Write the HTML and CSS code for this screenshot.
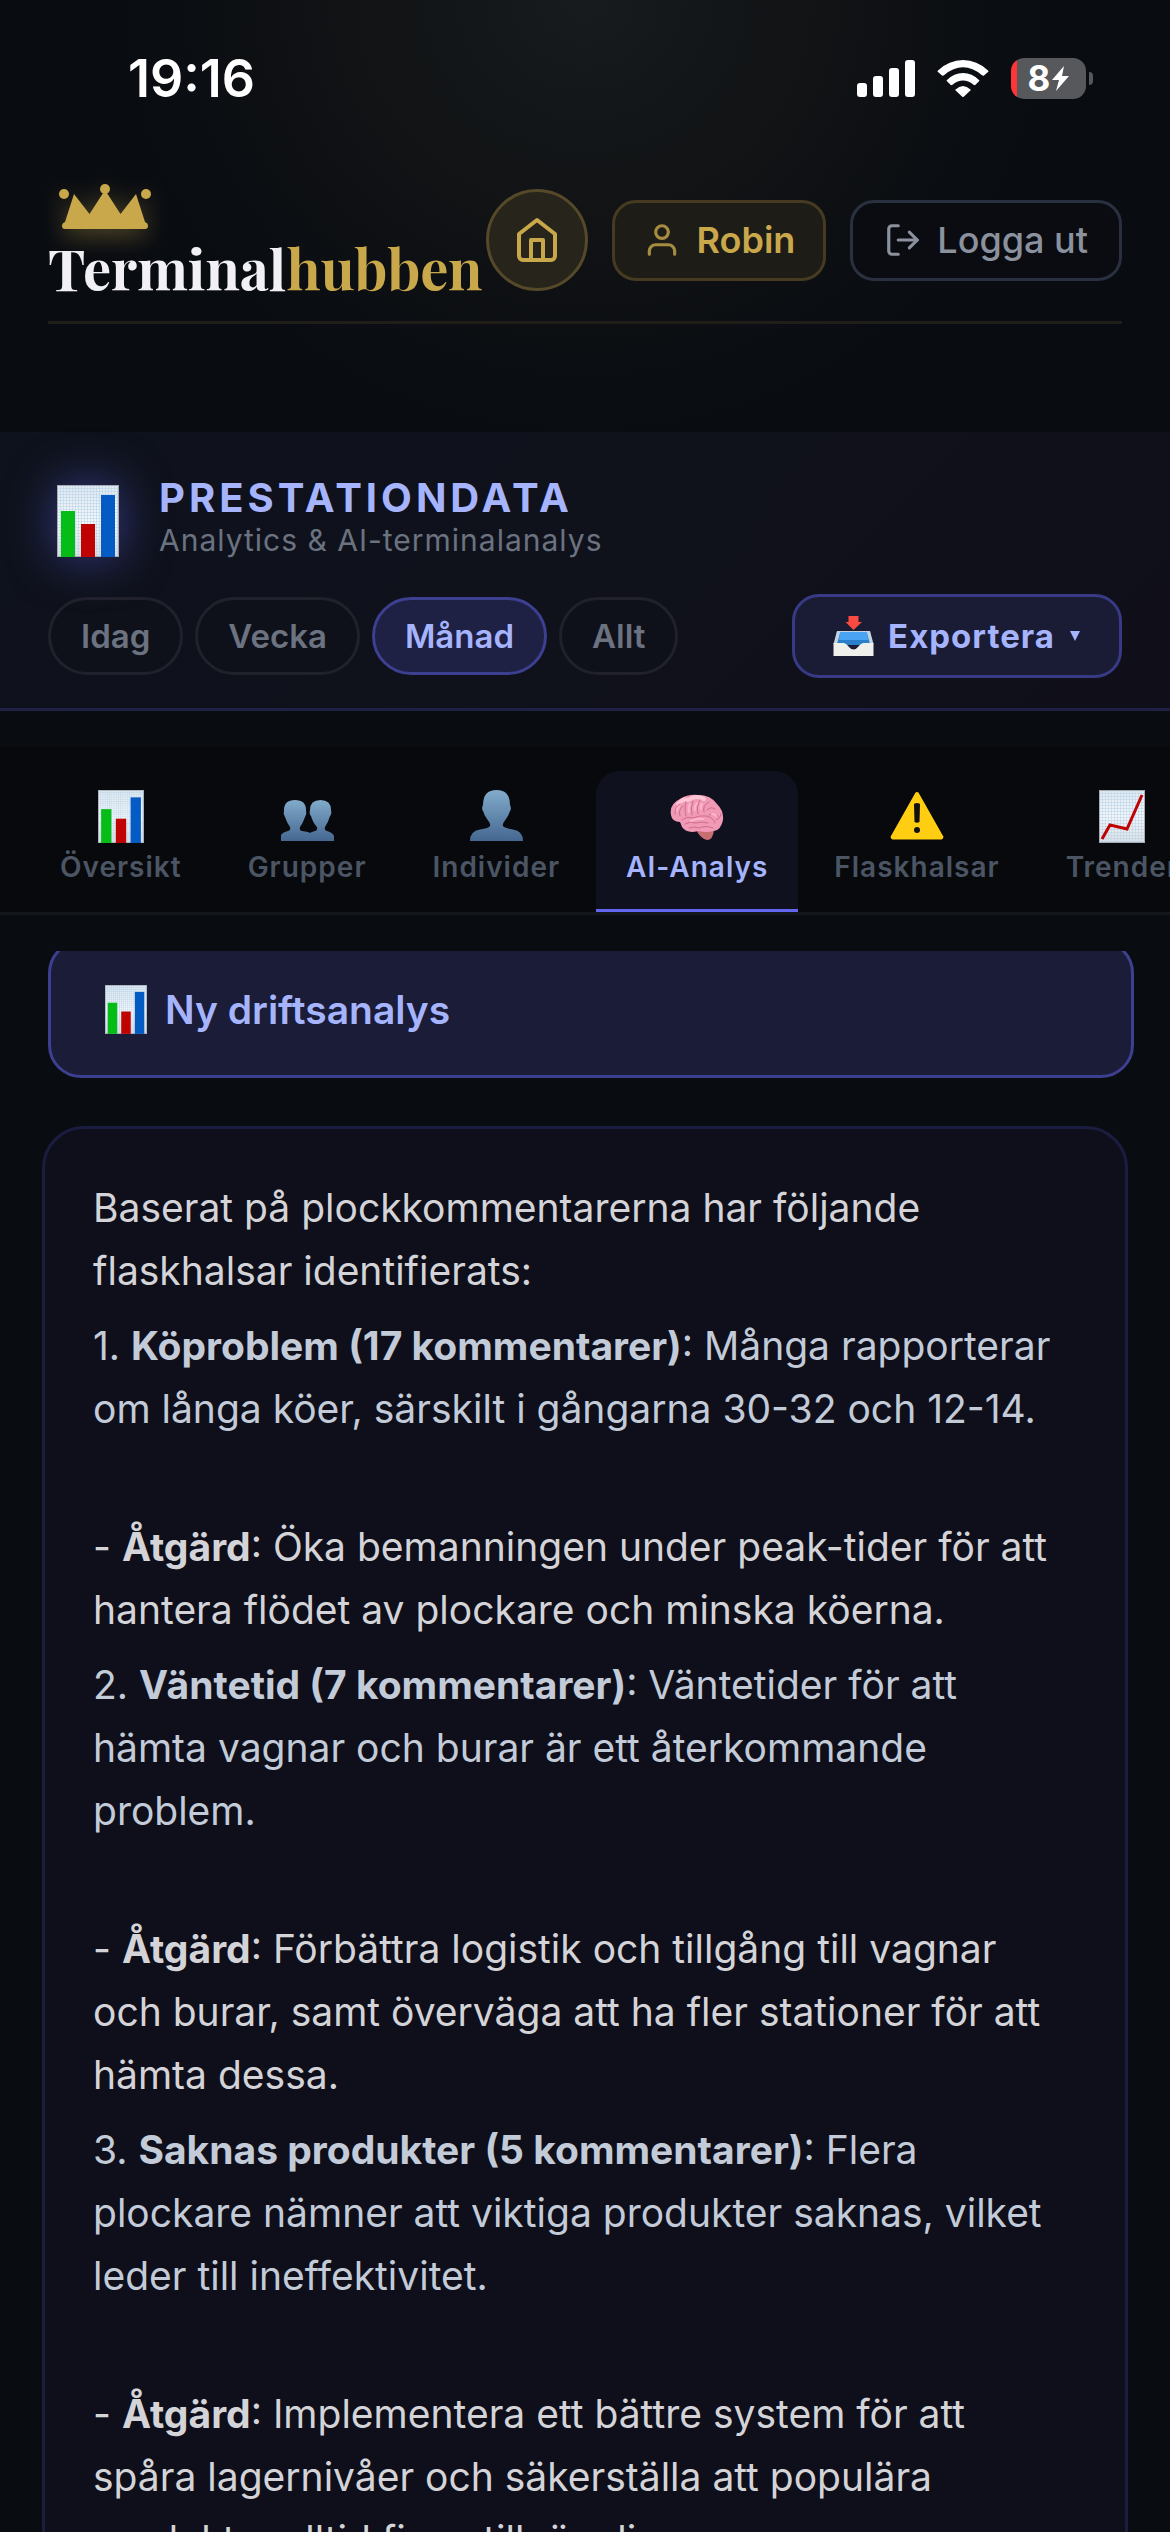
FILE: index.html
```html
<!DOCTYPE html>
<html lang="sv">
<head>
    <meta charset="UTF-8">
    <meta name="viewport" content="width=device-width, initial-scale=1.0">
    <title>Terminalhubben</title>
    <link rel="stylesheet" href="styles.css">
</head>
<body>
    <!-- Delade ikoner -->
    <svg class="sprite" aria-hidden="true">
        <defs>
            <linearGradient id="paper" x1="0" y1="0" x2="0" y2="1">
                <stop offset="0" stop-color="#dfe9f1"/>
                <stop offset="0.5" stop-color="#f3f7fa"/>
                <stop offset="1" stop-color="#dcdfe2"/>
            </linearGradient>
            <pattern id="grid" width="3" height="3" patternUnits="userSpaceOnUse">
                <path d="M0 0H3M0 0V3" stroke="#b4d0e6" stroke-width="1"/>
            </pattern>
            <linearGradient id="person" x1="0" y1="0" x2="0" y2="1">
                <stop offset="0" stop-color="#82abcb"/>
                <stop offset="1" stop-color="#456790"/>
            </linearGradient>
        </defs>
        <symbol id="icon-bars" viewBox="0 0 62 72">
            <rect width="62" height="72" fill="url(#paper)"/>
            <rect width="62" height="72" fill="url(#grid)"/>
            <rect x="0.5" y="0.5" width="61" height="71" fill="none" stroke="#a4abb2"/>
            <rect x="4" y="26" width="14" height="46" fill="#06bd18"/>
            <rect x="24" y="39" width="14" height="33" fill="#bf0202"/>
            <rect x="44" y="10" width="14" height="62" fill="#045bc4"/>
        </symbol>
    </svg>

    <div class="app">
        <div class="status-bar">
            <span class="time">19:16</span>
            <div class="status-icons">
                <svg width="58" height="37" viewBox="0 0 58 37" fill="#fff">
                    <rect y="23" width="10" height="14" rx="3"/>
                    <rect x="16" y="16" width="10" height="21" rx="3"/>
                    <rect x="32" y="8" width="10" height="29" rx="3"/>
                    <rect x="48" width="10" height="37" rx="3"/>
                </svg>
                <svg width="52" height="37" viewBox="0 0 52 37" fill="#fff">
                    <path d="M1 10.500Q0 11.500 1 12L5 15.500Q6 16 7 15.200Q26 -0.500 45 15.200Q46 16 47 15.500L51 12Q52 11.500 51 10.500Q40 0 26 0Q12 0 1 10.500Z"/>
                    <path d="M10 20Q9 20.500 10 21.300L13.500 24.800Q14.500 25.500 15.500 24.700Q26 16.500 36.500 24.700Q37.500 25.500 38.500 24.800L42 21.300Q43 20.500 42 20Q35 13 26 13Q17 13 10 20Z"/>
                    <path d="M18.500 29.500Q18 30 18.600 30.500L25.300 36.700Q26 37.300 26.700 36.700L33.400 30.500Q34 30 33.500 29.500Q26 22.500 18.500 29.500Z"/>
                </svg>
                <div class="battery">
                    <span>8</span>
                    <svg width="17" height="25" viewBox="0 0 17 25" fill="#fff"><path d="M12 0L0 14H7L4 25L17 10H10Z"/></svg>
                </div>
            </div>
        </div>

        <header class="header">
            <div class="logo">
                <svg class="crown" width="92" height="46" viewBox="0 0 92 46" fill="#c9a84c">
                    <path d="M15 10L30.500 30L46 6L61.500 30L77 10L86 38Q89 39 89 42Q89 45 86 45H6Q3 45 3 42Q3 39 6 38Z"/>
                    <circle cx="5" cy="10" r="5"/>
                    <circle cx="46" cy="5" r="5"/>
                    <circle cx="87" cy="10" r="5"/>
                </svg>
                <h1>Terminal<span>hubben</span></h1>
            </div>
            <nav class="actions">
                <a href="#" class="home-btn" aria-label="Hem">
                    <svg width="48" height="48" viewBox="0 0 24 24"><path d="M3 9l9-7 9 7v11a2 2 0 0 1-2 2H5a2 2 0 0 1-2-2z"/><path d="M9 22V12h6v10"/></svg>
                </a>
                <button type="button" class="btn btn-user">
                    <svg width="38" height="38" viewBox="0 0 24 24"><path d="M20 21v-2a4 4 0 0 0-4-4H8a4 4 0 0 0-4 4v2"/><circle cx="12" cy="7" r="4"/></svg>
                    Robin
                </button>
                <button type="button" class="btn btn-logout">
                    <svg width="38" height="38" viewBox="0 0 24 24"><path d="M9 21H5a2 2 0 0 1-2-2V5a2 2 0 0 1 2-2h4"/><path d="M16 17l5-5-5-5"/><path d="M21 12H9"/></svg>
                    Logga ut
                </button>
            </nav>
        </header>

        <section class="panel">
            <div class="panel-title">
                <svg class="panel-icon" width="62" height="72"><use href="#icon-bars"/></svg>
                <div>
                    <h2>PRESTATIONDATA</h2>
                    <p>Analytics &amp; AI-terminalanalys</p>
                </div>
            </div>
            <div class="panel-controls">
                <div class="periods">
                    <button type="button" class="pill">Idag</button>
                    <button type="button" class="pill">Vecka</button>
                    <button type="button" class="pill active">Månad</button>
                    <button type="button" class="pill">Allt</button>
                </div>
                <button type="button" class="btn-export">
                    <svg width="41" height="41" viewBox="0 0 41 41">
                        <path d="M4 15H37L40 29H1Z" fill="#2a7fcb"/>
                        <path d="M4 15H37L40.500 28H37L34 17H7L4 28H0.500Z" fill="#c5d3db"/>
                        <path d="M7 16H34L35 24H6Z" fill="#4aa3f3"/>
                        <path d="M0.500 27H11Q14 28 16 31Q20.500 36 25 31Q27 28 30 27H40.500V40H0.500Z" fill="#efefec"/>
                        <path d="M15.500 0H25.500V6H29L20.500 14L12.500 6H15.500Z" fill="#fb4a41"/>
                    </svg>
                    Exportera
                    <svg width="12" height="12" viewBox="0 0 12 12"><path d="M1 1H11L6 11Z" fill="#a5b4fc"/></svg>
                </button>
            </div>
        </section>

        <nav class="tabs">
            <a href="#" class="tab">
                <svg width="46" height="53"><use href="#icon-bars"/></svg>
                Översikt
            </a>
            <a href="#" class="tab">
                <svg width="53" height="53" viewBox="0 0 53 53" fill="url(#person)">
                    <path d="M27 51V45Q29 42 34 41Q37 40 36 37Q32 33 30 26Q28 24 29 20Q29 10 39.500 10Q50 10 50 20Q51 24 49 26Q47 33 44 37Q43 40 46 41Q52 43 53 46V51Z"/>
                    <path d="M0 51V45Q2 42 7 41Q10 40 9 37Q6 33 4 27Q2 24 3 20Q3 10 14 10Q25 10 25 20Q26 24 24 27Q22 33 19 37Q18 40 21 41Q34 42 35 51Z"/>
                </svg>
                Grupper
            </a>
            <a href="#" class="tab">
                <svg width="53" height="53" viewBox="0 0 53 53" fill="url(#person)">
                    <path d="M0 51Q0 41 10 39.500Q19 38 20 36Q21 34 17 29Q14 25 13.500 22Q11 19 13 15Q13 0 26.500 0Q40 0 40 15Q42 19 39.500 22Q39 25 36 29Q32 34 33 36Q34 38 43 39.500Q53 41 53 51Z"/>
                </svg>
                Individer
            </a>
            <a href="#" class="tab active">
                <svg width="54" height="53" viewBox="0 0 54 53" fill="none" stroke-linecap="round">
                    <path d="M26 40Q36 35 44 40Q43 50 37 50Q31 49 26 40Z" fill="#c76f70"/>
                    <path d="M1 25Q-1 14 10 9Q18 4 28 5Q41 5 47 14Q54 21 53 30Q51 40 44 41Q36 43 28 41Q17 44 12 37Q11 34 10 32Q2 32 1 25Z" fill="#f09ab6"/>
                    <path d="M8 14Q13 8 18 10M20 9Q27 5 34 9" stroke="#ffc5d5" stroke-width="4"/>
                    <path d="M5 24Q5 16 10 14M10 26Q8 19 13 16M16 26Q14 18 16 12M22 25Q20 18 23 11M28 24Q26 17 30 10M34 22Q32 15 39 12M37 20Q41 16 45 19M39 25Q44 22 48 26M46 30Q50 29 51 24M12 30Q17 26 23 28Q30 25 36 26Q43 27 45 33M15 34Q20 31 26 33Q32 31 38 33M19 38Q24 36 29 38Q36 35 43 38" stroke="#cf6d8e" stroke-width="1"/>
                    <path d="M7 21Q7 18 9 17M19 22Q18 17 20 14M25 20Q24 17 27 13M31 19Q30 16 32 14M21 31Q27 28 33 29M42 24Q46 24 46 26" stroke="#fdb6ca" stroke-width="2"/>
                </svg>
                AI-Analys
            </a>
            <a href="#" class="tab">
                <svg width="54" height="53" viewBox="0 0 54 53">
                    <path d="M27 4L51 46.500Q52 47.500 50 47.500H4Q2 47.500 3 46.500Z" fill="#ffce12" stroke="#ffce12" stroke-width="4" stroke-linejoin="round"/>
                    <path d="M24 14.500Q24 13 27 13Q30 13 30 14.500L29.500 32Q27 33.500 24.500 32Z" fill="#111"/>
                    <circle cx="27" cy="40" r="3" fill="#111"/>
                </svg>
                Flaskhalsar
            </a>
            <a href="#" class="tab">
                <svg width="46" height="53" viewBox="0 0 46 53">
                    <rect width="46" height="53" fill="url(#paper)"/>
                    <rect width="46" height="53" fill="url(#grid)"/>
                    <rect x="0.500" y="0.500" width="45" height="52" fill="none" stroke="#a4abb2"/>
                    <path d="M3 49L11 35L28 39L43 5" fill="none" stroke="#bf0202" stroke-width="3"/>
                </svg>
                Trender
            </a>
        </nav>

        <main class="content">
            <button type="button" class="btn-analysis">
                <svg width="42" height="49"><use href="#icon-bars"/></svg>
                Ny driftsanalys
            </button>
            <article class="result">
                <p>Baserat på plockkommentarerna har följande flaskhalsar identifierats:</p>
                <p class="item">1. <strong>Köproblem (17 kommentarer)</strong>: Många rapporterar om långa köer, särskilt i gångarna 30-32 och 12-14.</p>
                <p>- <strong>Åtgärd</strong>: Öka bemanningen under peak-tider för att hantera flödet av plockare och minska köerna.</p>
                <p class="item">2. <strong>Väntetid (7 kommentarer)</strong>: Väntetider för att hämta vagnar och burar är ett återkommande problem.</p>
                <p>- <strong>Åtgärd</strong>: Förbättra logistik och tillgång till vagnar och burar, samt överväga att ha fler stationer för att hämta dessa.</p>
                <p class="item">3. <strong>Saknas produkter (5 kommentarer)</strong>: Flera plockare nämner att viktiga produkter saknas, vilket leder till ineffektivitet.</p>
                <p>- <strong>Åtgärd</strong>: Implementera ett bättre system för att spåra lagernivåer och säkerställa att populära produkter alltid finns tillgängliga.</p>
            </article>
        </main>
    </div>
</body>
</html>
```
FILE: styles.css
```css
* {
    box-sizing: border-box;
}
body {
    margin: 0;
    font-family: Inter, "Liberation Sans", sans-serif;
    background: #090c11;
    color: #d4d4d8;
}
h1, h2, p {
    margin: 0;
}
button {
    font-family: inherit;
    cursor: pointer;
}
a {
    text-decoration: none;
}
svg {
    flex-shrink: 0;
}
.sprite {
    position: absolute;
    width: 0;
    height: 0;
}
.app {
    display: flex;
    flex-direction: column;
    height: 100vh;
    overflow: hidden;
    background: radial-gradient(ellipse 460px 430px at 50% 0, #171b1d 0%, #111315 50%, #090c11 100%);
}

/* Status */
.status-bar {
    display: flex;
    justify-content: space-between;
    align-items: center;
    height: 156px;
    flex-shrink: 0;
    padding: 0 84px 0 128px;
    color: #fff;
}
.time {
    font-size: 52px;
    font-weight: 600;
}
.status-icons {
    display: flex;
    align-items: center;
    gap: 22px;
}
.battery {
    position: relative;
    display: flex;
    align-items: center;
    justify-content: center;
    gap: 2px;
    width: 75px;
    height: 41px;
    border-radius: 13px;
    background: linear-gradient(to right, #ff3537 6px, #57585c 6px);
    font-size: 35px;
    font-weight: 700;
}
.battery::after {
    content: "";
    position: absolute;
    left: 78px;
    top: 14px;
    width: 4px;
    height: 13px;
    border-radius: 0 6px 6px 0;
    background: #57585c;
}

/* Header */
.header {
    display: flex;
    justify-content: space-between;
    align-items: center;
    flex-shrink: 0;
    margin: 0 48px 108px;
    padding: 24px 0 21px;
    border-bottom: 3px solid #211e19;
}
.logo {
    display: flex;
    flex-direction: column;
    gap: 9px;
    padding: 4px 0 3px;
}
.crown {
    margin-left: 11px;
    filter: drop-shadow(0 6px 12px rgba(201, 168, 76, 0.4));
}
.logo h1 {
    font-family: "Playfair Display", "Liberation Serif", serif;
    font-size: 56px;
    line-height: 58px;
    font-weight: 700;
    color: #f0f0f5;
}
.logo h1 span {
    color: #c9a84c;
}
.actions {
    display: flex;
    align-items: center;
    gap: 24px;
}
.actions svg {
    fill: none;
    stroke: currentColor;
    stroke-width: 2;
    stroke-linecap: round;
    stroke-linejoin: round;
}
.home-btn {
    display: flex;
    align-items: center;
    justify-content: center;
    width: 102px;
    height: 102px;
    border: 3px solid #56492a;
    border-radius: 50%;
    background: #27241b;
    color: #c9a84c;
}
.btn {
    display: flex;
    align-items: center;
    gap: 15px;
    height: 81px;
    padding: 0 28px;
    border-radius: 24px;
    font-size: 36px;
    white-space: nowrap;
}
.btn-user {
    border: 3px solid #463b22;
    background: #1d1c17;
    color: #c9a84c;
    font-weight: 600;
}
.btn-user svg {
    opacity: 0.8;
}
.btn-logout {
    padding: 0 31px;
    border: 3px solid #293040;
    background: #0a0c11;
    color: #8b929e;
    font-weight: 500;
}

/* Prestationdata */
.panel {
    display: flex;
    flex-direction: column;
    gap: 36px;
    flex-shrink: 0;
    padding: 42px 48px 30px;
    border-bottom: 3px solid #1e2044;
    background: linear-gradient(135deg, #0e121c 0%, #0f111b 50%, #100f19 100%);
}
.panel-title {
    display: flex;
    align-items: center;
    gap: 40px;
}
.panel-icon {
    margin: 10px 0 0 9px;
    filter: drop-shadow(0 0 24px rgba(99, 102, 241, 0.5));
}
.panel h2 {
    font-size: 40px;
    line-height: 48px;
    font-weight: 700;
    letter-spacing: 4px;
    color: #a5b4fc;
}
.panel p {
    font-size: 30px;
    line-height: 36px;
    letter-spacing: 1px;
    color: #6b7280;
}
.panel-controls {
    display: flex;
    justify-content: space-between;
    align-items: center;
}
.periods {
    display: flex;
    gap: 12px;
}
.pill {
    height: 78px;
    padding: 0 30px;
    border: 3px solid #20212b;
    border-radius: 39px;
    background: #0f111a;
    color: #6b7280;
    font-size: 33px;
    font-weight: 600;
}
.pill.active {
    border-color: #3d3f90;
    background: #1e2044;
    color: #a5b4fc;
}
.btn-export {
    display: flex;
    align-items: center;
    gap: 14px;
    height: 84px;
    padding: 0 38px;
    border: 3px solid #383a85;
    border-radius: 27px;
    background: #1a1b35;
    color: #a5b4fc;
    font-size: 33px;
    font-weight: 700;
    letter-spacing: 1px;
}

/* Flikar */
.tabs {
    display: flex;
    gap: 6px;
    flex-shrink: 0;
    margin-top: 36px;
    padding: 24px 30px 0;
    overflow: hidden;
    border-bottom: 3px solid #14171b;
    background: #07090d;
}
.tab {
    display: flex;
    flex-direction: column;
    align-items: center;
    gap: 6px;
    flex-shrink: 0;
    height: 141px;
    padding: 19px 30px 0;
    border-radius: 24px 24px 0 0;
    color: #4b5563;
    font-size: 28px;
    line-height: 36px;
    font-weight: 600;
    letter-spacing: 1px;
}
.tab.active {
    background: linear-gradient(to top, #6366f1 3px, #0f111e 3px);
    color: #a5b4fc;
}

/* Analys */
.content {
    display: flex;
    flex-direction: column;
    flex: 1;
    min-height: 0;
    margin: 36px 36px 0 42px;
    overflow: hidden;
}
.btn-analysis {
    display: flex;
    align-items: center;
    gap: 18px;
    flex-shrink: 0;
    height: 138px;
    margin: -11px 0 48px 6px;
    padding: 0 54px;
    border: 3px solid #3d3f90;
    border-radius: 33px;
    background: #1a1c38;
    color: #a5b4fc;
    font-size: 39px;
    font-weight: 600;
}
.result {
    flex-shrink: 0;
    margin-right: 6px;
    padding: 47px 60px 48px 48px;
    border: 3px solid #1b1d40;
    border-radius: 42px;
    background: #0e0f1b;
    font-size: 39px;
    line-height: 63px;
}
.result p {
    margin-bottom: 12px;
}
.result .item {
    margin-bottom: 75px;
    color: #c3cbd8;
}
.result strong {
    font-weight: 700;
}
```
